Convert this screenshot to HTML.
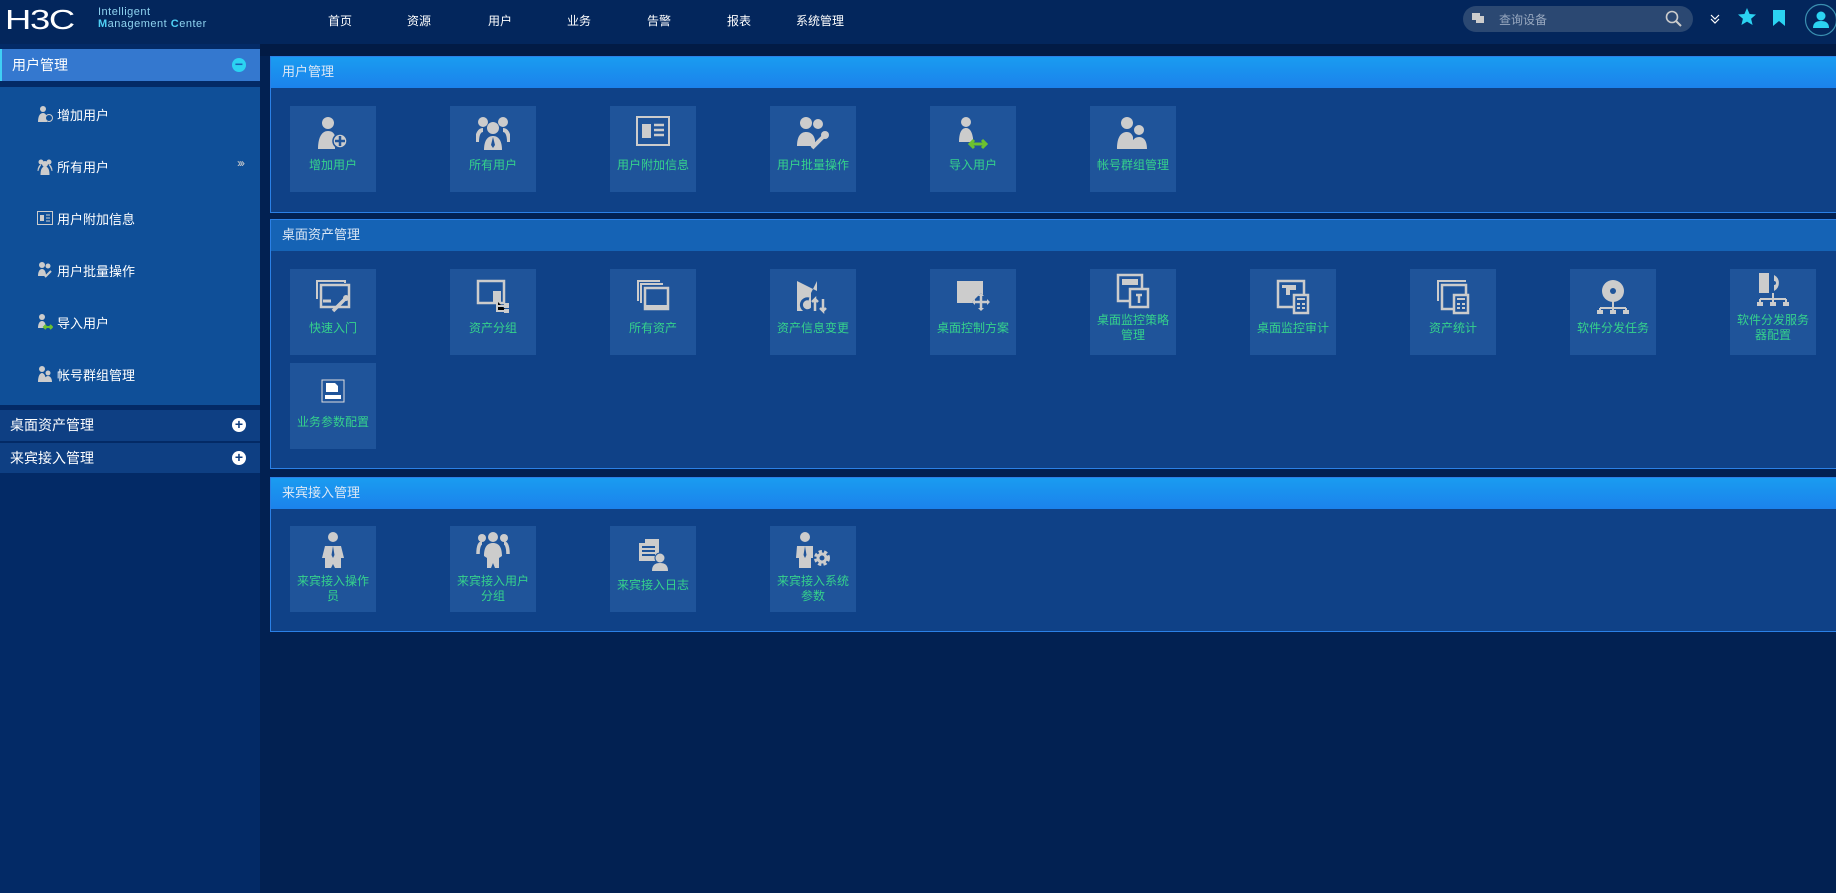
<!DOCTYPE html>
<html><head><meta charset="utf-8"><style>
*{margin:0;padding:0;box-sizing:border-box}
body{width:1836px;height:893px;overflow:hidden;background:#022152;font-family:"Liberation Sans","Noto Sans CJK SC",sans-serif;position:relative}
.abs{position:absolute}
#top{left:0;top:0;width:1836px;height:44px;background:#03265c}
#strip{left:260px;top:44px;width:1576px;height:12px;background:#021b45}
.nav{top:12px;color:#fff;font-size:12px}
#side{left:0;top:44px;width:260px;height:849px;background:#032a66}
.sh{left:0;width:260px;color:#fff;font-size:14px;padding-left:10px}
.pl{position:absolute;right:14px;width:14px;height:14px;border-radius:50%;background:#fff;color:#0e3d80;font-size:14px;line-height:13px;text-align:center;font-weight:bold}
.item{left:37px;color:#fff;font-size:13px;display:flex;align-items:center;gap:4px;height:20px}
.panel{left:270px;width:1566px;border:1px solid #2b80e6;border-right:none;background:#0f4187}
.ph{height:31px;background:linear-gradient(#1a9cf0,#1b82ec);color:#dbe7f5;font-size:13px;line-height:30px;padding-left:11px}
.ph2{background:#1563b5}
.tile{position:absolute;width:86px;height:86px;background:#1f549a;text-align:center;color:#35d28c;font-size:12px;line-height:15px}
.tile svg{display:block;margin:10px auto 0}
.tile .t{position:absolute;left:2px;right:2px;top:52px}
.tile .t2{top:44px}
</style></head><body>
<div class="abs" id="top"></div>
<div class="abs" id="strip"></div>
<div class="abs" style="left:5px;top:4px;color:#fff;font-size:28px;font-weight:normal;letter-spacing:-1px;transform:scaleX(1.3);transform-origin:left">H3C</div>
<div class="abs" style="left:98px;top:6px;color:#8fd3f0;font-size:11px;line-height:12px;letter-spacing:.5px">Intelligent<br><b style="color:#4fd0f5">M</b>anagement <b style="color:#4fd0f5">C</b>enter</div>
<div class="abs nav" style="left:328px">首页</div>
<div class="abs nav" style="left:407px">资源</div>
<div class="abs nav" style="left:488px">用户</div>
<div class="abs nav" style="left:567px">业务</div>
<div class="abs nav" style="left:647px">告警</div>
<div class="abs nav" style="left:727px">报表</div>
<div class="abs nav" style="left:796px">系统管理</div>
<div class="abs" style="left:1463px;top:6px;width:230px;height:26px;border-radius:13px;background:#2b4872"></div>
<div class="abs" style="left:1472px;top:13px;width:8px;height:7px;background:#ccc"></div><div class="abs" style="left:1476px;top:16px;width:8px;height:7px;background:#ccc"></div>
<div class="abs" style="left:1499px;top:11px;color:#98a8bf;font-size:12px">查询设备</div>
<svg class="abs" style="left:1665px;top:10px" width="18" height="18"><circle cx="7" cy="7" r="5.5" fill="none" stroke="#ccc" stroke-width="1.6"/><path d="M11 11l5 5" stroke="#ccc" stroke-width="2"/></svg>
<svg class="abs" style="left:1709px;top:13px" width="12" height="12"><path d="M2 2l4 4 4-4M2 6l4 4 4-4" fill="none" stroke="#fff" stroke-width="1.2"/></svg>
<svg class="abs" style="left:1737px;top:7px" width="20" height="20"><path d="M10 1l2.6 6 6.4.5-4.9 4.2 1.5 6.3L10 14.6 4.4 18l1.5-6.3L1 7.5 7.4 7z" fill="#2bd3f2"/></svg>
<svg class="abs" style="left:1772px;top:10px" width="14" height="16"><path d="M1 0h12v16l-6-5-6 5z" fill="#2bd3f2"/></svg>
<svg class="abs" style="left:1804px;top:3px" width="34" height="34"><circle cx="17" cy="17" r="15.5" fill="#03265c" stroke="#3a8fb0" stroke-width="1.2"/><circle cx="17" cy="13" r="4.5" fill="#2bd3f2"/><path d="M9 25c0-5 3-7 8-7s8 2 8 7z" fill="#2bd3f2"/></svg>

<div class="abs" id="side"></div>
<div class="abs sh" style="top:49px;height:32px;line-height:32px;background:#3478cf;border-left:2px solid #3fd0f5">用户管理<span class="pl" style="top:9px;background:#2bd3f2;color:#1a5fb5">−</span></div>
<div class="abs" style="left:0;top:87px;width:260px;height:318px;background:#0f4f98"></div>
<div class="abs sh" style="top:410px;height:31px;line-height:31px;background:#0e3f83">桌面资产管理<span class="pl" style="top:8px">+</span></div>
<div class="abs sh" style="top:443px;height:30px;line-height:30px;background:#0e3f83">来宾接入管理<span class="pl" style="top:8px">+</span></div>
<div class="abs item" style="top:104px"><svg width="16" height="18"><circle cx="6" cy="4" r="3" fill="#ccc"/><path d="M1 17c0-6 2-9 5-9s4 3 4 9z" fill="#ccc"/><circle cx="12" cy="13" r="3.5" fill="#0f4f98" stroke="#ccc"/></svg>增加用户</div>
<div class="abs item" style="top:156px"><svg width="16" height="18"><circle cx="4" cy="5" r="2.5" fill="#ccc"/><circle cx="12" cy="5" r="2.5" fill="#ccc"/><circle cx="8" cy="7" r="3" fill="#ccc"/><path d="M1 14c0-4 2-6 3-6M15 14c0-4-2-6-3-6M4 18c0-6 2-8 4-8s4 2 4 8z" fill="#ccc" stroke="#ccc"/></svg>所有用户</div>
<div class="abs" style="left:237px;top:156px;color:#ccc;font-size:12px;letter-spacing:-2px">›››</div>
<div class="abs item" style="top:208px"><svg width="16" height="14"><rect x=".5" y=".5" width="15" height="13" fill="none" stroke="#ccc"/><rect x="3" y="4" width="4" height="6" fill="#ccc"/><path d="M9 4h4M9 7h4M9 10h4" stroke="#ccc"/></svg>用户附加信息</div>
<div class="abs item" style="top:260px"><svg width="16" height="18"><circle cx="5" cy="4" r="3" fill="#ccc"/><circle cx="11" cy="5" r="2.5" fill="#ccc"/><path d="M1 15c0-5 2-7 4-7s4 2 4 7z" fill="#ccc"/><path d="M8 16l6-6" stroke="#ccc" stroke-width="2"/></svg>用户批量操作</div>
<div class="abs item" style="top:312px"><svg width="16" height="18"><circle cx="5" cy="4" r="3" fill="#ccc"/><path d="M1 15c0-5 2-7 4-7s4 2 4 7z" fill="#ccc"/><path d="M7 14h8M9 12l-2 2 2 2M13 12l2 2-2 2" stroke="#6cc12f" stroke-width="2" fill="none"/></svg>导入用户</div>
<div class="abs item" style="top:364px"><svg width="16" height="18"><circle cx="5" cy="4" r="3" fill="#ccc"/><circle cx="11" cy="8" r="2.5" fill="#ccc"/><path d="M1 17c0-6 2-9 4-9s4 3 4 9zM7 17c0-4 2-6 4-6s4 2 4 6z" fill="#ccc"/></svg>帐号群组管理</div>

<div class="abs panel" style="top:56px;height:157px"><div class="ph">用户管理</div></div>
<div class="abs panel" style="top:219px;height:250px"><div class="ph ph2">桌面资产管理</div></div>
<div class="abs panel" style="top:477px;height:155px"><div class="ph">来宾接入管理</div></div>

<div class="tile" style="left:290px;top:106px"><svg width="32" height="34"><circle cx="11" cy="7" r="6" fill="#ccc"/><path d="M1 33c0-12 4-18 10-18 4 0 6 2 7 5v13z" fill="#ccc"/><circle cx="23" cy="25" r="7" fill="#ccc" stroke="#1f549a" stroke-width="1.5"/><path d="M23 20v10M18 25h10" stroke="#1f549a" stroke-width="2.5"/></svg><div class="t">增加用户</div></div>
<div class="tile" style="left:450px;top:106px"><svg width="34" height="34"><circle cx="7" cy="6" r="5" fill="#ccc"/><circle cx="27" cy="6" r="5" fill="#ccc"/><circle cx="17" cy="12" r="6" fill="#ccc"/><path d="M1 26c0-9 3-12 6-12M33 26c0-9-3-12-6-12" stroke="#ccc" stroke-width="4" fill="none"/><path d="M8 34c0-10 4-14 9-14s9 4 9 14z" fill="#ccc"/><path d="M17 21l-2 8 2 3 2-3z" fill="#1f549a"/></svg><div class="t">所有用户</div></div>
<div class="tile" style="left:610px;top:106px"><svg width="34" height="30"><rect x="1" y="1" width="32" height="28" fill="none" stroke="#ccc" stroke-width="2"/><rect x="6" y="8" width="9" height="14" fill="#ccc"/><path d="M18 9h10M18 14h10M18 19h10" stroke="#ccc" stroke-width="2.5"/></svg><div class="t">用户附加信息</div></div>
<div class="tile" style="left:770px;top:106px"><svg width="34" height="34"><circle cx="10" cy="7" r="6" fill="#ccc"/><circle cx="22" cy="8" r="5" fill="#ccc"/><path d="M1 30c0-10 4-14 9-14s8 3 9 8v6z" fill="#ccc"/><path d="M16 32l12-12" stroke="#ccc" stroke-width="4"/><circle cx="29" cy="19" r="4" fill="#ccc"/></svg><div class="t">用户批量操作</div></div>
<div class="tile" style="left:930px;top:106px"><svg width="34" height="34"><circle cx="10" cy="6" r="5" fill="#ccc"/><path d="M3 26c0-10 3-14 7-14s6 4 7 10v4z" fill="#ccc"/><path d="M14 28h16M18 24l-4 4 4 4M26 24l4 4-4 4" stroke="#6cc12f" stroke-width="3" fill="none"/></svg><div class="t">导入用户</div></div>
<div class="tile" style="left:1090px;top:106px"><svg width="34" height="34"><circle cx="11" cy="7" r="6" fill="#ccc"/><circle cx="23" cy="14" r="5" fill="#ccc"/><path d="M1 33c0-12 4-17 10-17 3 0 5 2 6 5v12zM15 33c0-8 3-12 8-12s8 4 8 12z" fill="#ccc"/></svg><div class="t">帐号群组管理</div></div>

<div class="tile" style="left:290px;top:269px"><svg width="36" height="34"><path d="M2 20V2h28v2" fill="none" stroke="#ccc" stroke-width="2"/><rect x="6" y="6" width="28" height="22" fill="none" stroke="#ccc" stroke-width="2.5"/><path d="M8 22h8" stroke="#ccc" stroke-width="3"/><path d="M18 32l12-12" stroke="#ccc" stroke-width="3.5"/><circle cx="31" cy="19" r="3" fill="#ccc"/></svg><div class="t">快速入门</div></div>
<div class="tile" style="left:450px;top:269px"><svg width="34" height="34"><rect x="2" y="2" width="26" height="22" fill="none" stroke="#ccc" stroke-width="2.5"/><rect x="17" y="12" width="8" height="11" fill="#ccc"/><path d="M21 22v10h10M21 27h10" stroke="#ccc" stroke-width="2"/><rect x="28" y="24" width="5" height="5" fill="#ccc"/><rect x="28" y="30" width="5" height="4" fill="#ccc"/></svg><div class="t">资产分组</div></div>
<div class="tile" style="left:610px;top:269px"><svg width="34" height="34"><path d="M2 22V2h22M5 24V5h22" fill="none" stroke="#ccc" stroke-width="2"/><rect x="9" y="9" width="23" height="21" fill="none" stroke="#ccc" stroke-width="2.5"/><rect x="9" y="26" width="23" height="5" fill="#ccc"/></svg><div class="t">所有资产</div></div>
<div class="tile" style="left:770px;top:269px"><svg width="36" height="36"><path d="M2 2v30h14V14L22 2v10" fill="#ccc"/><path d="M14 20a6 6 0 1 0 4 8" stroke="#1f549a" stroke-width="3" fill="none"/><path d="M20 32V20l-3 3M20 20l3 3M28 20v12l-3-3M28 32l3-3" stroke="#ccc" stroke-width="2.5" fill="none"/></svg><div class="t">资产信息变更</div></div>
<div class="tile" style="left:930px;top:269px"><svg width="36" height="34"><path d="M2 2h26v16l-10 6H2z" fill="#ccc"/><path d="M26 14l9 9-9 9-9-9z" fill="#1f549a"/><path d="M26 16v14M19 23h14" stroke="#ccc" stroke-width="2.5"/><path d="M26 14l-3 3h6zM26 32l-3-3h6zM17 23l3-3v6zM35 23l-3-3v6z" fill="#ccc"/></svg><div class="t">桌面控制方案</div></div>
<div class="tile" style="left:1090px;top:269px"><svg width="34" height="36" style="margin-top:4px"><rect x="2" y="2" width="24" height="26" fill="none" stroke="#ccc" stroke-width="2.5"/><path d="M6 6h16v6H6z" fill="#ccc"/><rect x="14" y="16" width="18" height="18" fill="#1f549a" stroke="#ccc" stroke-width="2.5"/><path d="M20 22h6M23 22v8" stroke="#ccc" stroke-width="2.5"/></svg><div class="t t2">桌面监控策略<br>管理</div></div>
<div class="tile" style="left:1250px;top:269px"><svg width="34" height="36"><rect x="2" y="2" width="26" height="26" fill="none" stroke="#ccc" stroke-width="2.5"/><path d="M6 6h14v5h-6v5h-4V9H6z" fill="#ccc"/><rect x="18" y="16" width="14" height="18" fill="#1f549a" stroke="#ccc" stroke-width="2.5"/><path d="M21 20h8M21 25h3M26 25h3M21 29h3M26 29h3" stroke="#ccc" stroke-width="2"/></svg><div class="t">桌面监控审计</div></div>
<div class="tile" style="left:1410px;top:269px"><svg width="34" height="36"><path d="M2 22V2h28" fill="none" stroke="#ccc" stroke-width="2"/><rect x="6" y="6" width="24" height="24" fill="none" stroke="#ccc" stroke-width="2.5"/><rect x="18" y="16" width="14" height="18" fill="#1f549a" stroke="#ccc" stroke-width="2.5"/><path d="M21 20h8M21 25h3M26 25h3M21 29h3M26 29h3" stroke="#ccc" stroke-width="2"/></svg><div class="t">资产统计</div></div>
<div class="tile" style="left:1570px;top:269px"><svg width="34" height="36"><ellipse cx="17" cy="12" rx="11" ry="11" fill="#ccc"/><circle cx="17" cy="12" r="3" fill="#1f549a"/><path d="M17 22v7M4 29h26M4 29v5M17 29v5M30 29v5" stroke="#ccc" stroke-width="2"/><rect x="1" y="31" width="6" height="4" fill="#ccc"/><rect x="14" y="31" width="6" height="4" fill="#ccc"/><rect x="27" y="31" width="6" height="4" fill="#ccc"/></svg><div class="t">软件分发任务</div></div>
<div class="tile" style="left:1730px;top:269px"><svg width="34" height="36" style="margin-top:4px"><rect x="3" y="0" width="10" height="20" fill="#ccc"/><path d="M18 2a9 9 0 0 1 0 16z" fill="#ccc"/><circle cx="18" cy="10" r="2" fill="#1f549a"/><path d="M17 20v6M4 26h26M4 26v4M17 26v4M30 26v4" stroke="#ccc" stroke-width="2"/><rect x="1" y="29" width="6" height="4" fill="#ccc"/><rect x="14" y="29" width="6" height="4" fill="#ccc"/><rect x="27" y="29" width="6" height="4" fill="#ccc"/></svg><div class="t t2">软件分发服务<br>器配置</div></div>
<div class="tile" style="left:290px;top:363px"><svg width="24" height="24" style="margin-top:16px"><rect x="1" y="1" width="22" height="22" fill="#1f549a" stroke="#ddd"/><path d="M5 4h9l3 3v6H5z" fill="#fff"/><path d="M4 16h16v4H4z" fill="#fff"/></svg><div class="t">业务参数配置</div></div>

<div class="tile" style="left:290px;top:526px"><svg width="22" height="36" style="margin-top:6px"><circle cx="11" cy="5" r="5" fill="#ccc"/><path d="M3 14h16l3 12-3 0v10h-6l-2-4-2 4H3V26H0z" fill="#ccc"/><path d="M11 14l-1.5 9 1.5 3 1.5-3z" fill="#1f549a"/></svg><div class="t t2" style="top:48px">来宾接入操作<br>员</div></div>
<div class="tile" style="left:450px;top:526px"><svg width="34" height="36" style="margin-top:6px"><circle cx="6" cy="6" r="4" fill="#ccc"/><circle cx="28" cy="6" r="4" fill="#ccc"/><circle cx="17" cy="5" r="5" fill="#ccc"/><path d="M2 22c0-8 2-11 4-11M32 22c0-8-2-11-4-11" stroke="#ccc" stroke-width="3.5" fill="none"/><path d="M8 24c0-10 4-13 9-13s9 3 9 13l-3 2v10h-4l-2-5-2 5h-4V26z" fill="#ccc"/></svg><div class="t t2" style="top:48px">来宾接入用户<br>分组</div></div>
<div class="tile" style="left:610px;top:526px"><svg width="32" height="34" style="margin-top:12px"><path d="M2 5h6V1h14v22H2z" fill="#ccc"/><path d="M5 9h13M5 13h13M5 17h13" stroke="#1f549a" stroke-width="2"/><circle cx="23" cy="20" r="5" fill="#ccc" stroke="#1f549a" stroke-width="1"/><path d="M15 33c0-6 3-8 8-8s8 2 8 8z" fill="#ccc"/></svg><div class="t" style="top:52px">来宾接入日志</div></div>
<div class="tile" style="left:770px;top:526px"><svg width="36" height="36" style="margin-top:6px"><circle cx="10" cy="5" r="5" fill="#ccc"/><path d="M2 14h16v12h-2v10H4V26H1z" fill="#ccc"/><path d="M10 14l-1.5 9 1.5 3 1.5-3z" fill="#1f549a"/><circle cx="27" cy="26" r="6" fill="none" stroke="#ccc" stroke-width="4" stroke-dasharray="3 2"/><circle cx="27" cy="26" r="4" fill="none" stroke="#ccc" stroke-width="3"/></svg><div class="t t2" style="top:48px">来宾接入系统<br>参数</div></div>
</body></html>
